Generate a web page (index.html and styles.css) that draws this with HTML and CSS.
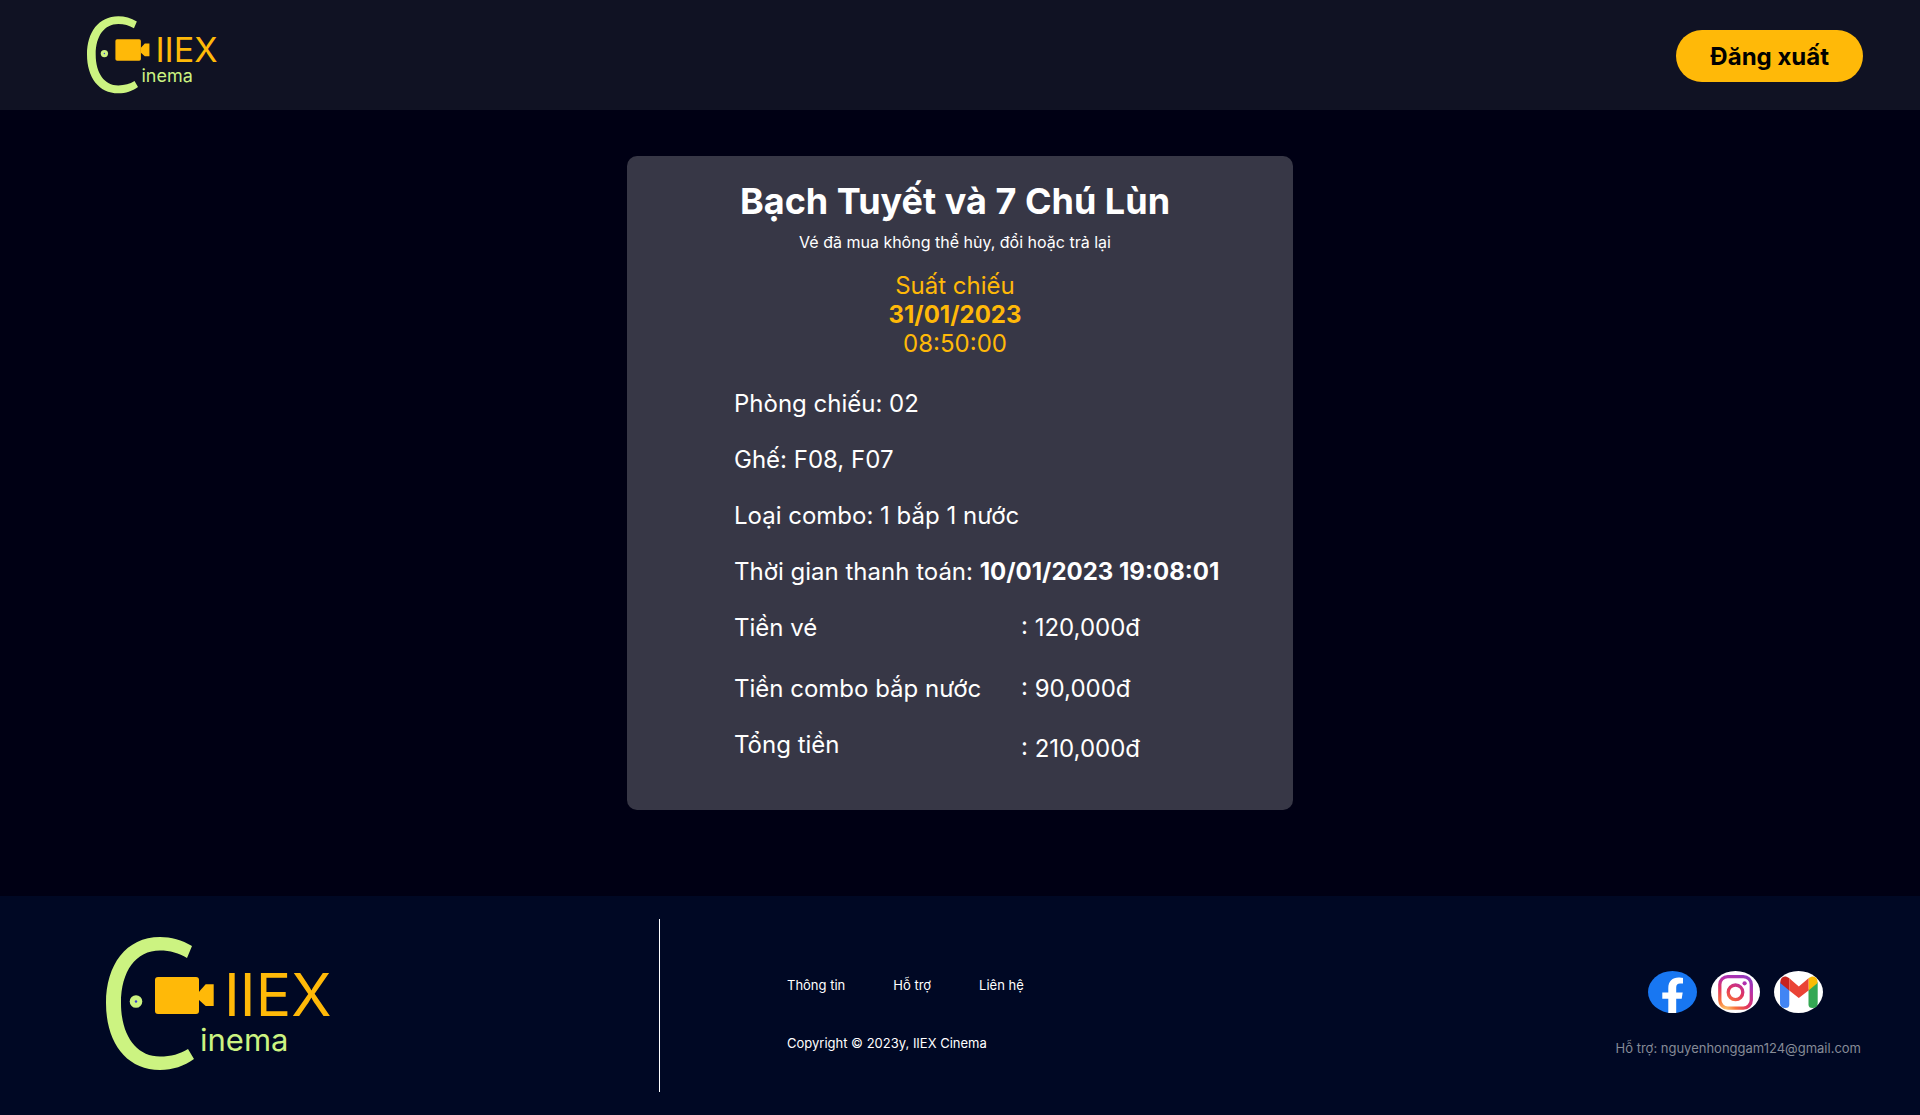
FILE: index.html
```html
<!DOCTYPE html>
<html lang="vi">
<head>
  <meta charset="utf-8">
  <meta name="viewport" content="width=device-width, initial-scale=1">
  <title>IIEX Cinema</title>
  <link rel="stylesheet" href="styles.css">
</head>
<body>
  <svg class="sprite" aria-hidden="true">
    <symbol id="logo" viewBox="0 0 226 134">
      <path fill="#ccf381" d="M86 9C76 3 65 0 54 0C20 0 0 28 0 66C0 105 20 133 54 133C67 133 78 129 88 122L82 112C74 117 65 119.500 54 119.500C30 119.500 15 98 15 66C15 34 30 13.500 54 13.500C64 13.500 73 16 81 21Z"/>
      <circle cx="30" cy="64.500" r="6.300" fill="#ccf381"/>
      <circle cx="30" cy="64.500" r="1.200" fill="#3a3fd8"/>
      <rect x="49" y="40" width="44" height="37" rx="3" fill="#ffb908"/>
      <path fill="#ffb908" d="M93 54.700L99.700 47.300H107.700V69H99.700L93 63Z"/>
      <text class="logo-name" x="118" y="79">IIEX</text>
      <text class="logo-sub" x="94" y="114">inema</text>
    </symbol>
  </svg>

  <header class="topbar">
    <a class="home" href="#" aria-label="IIEX Cinema"><svg class="logo logo-small"><use href="#logo"/></svg></a>
    <button class="logout" type="button">Đăng xuất</button>
  </header>

  <main class="main">
    <article class="ticket">
      <div class="intro">
        <h1 class="title">Bạch Tuyết và 7 Chú Lùn</h1>
        <p class="note">Vé đã mua không thể hủy, đổi hoặc trả lại</p>
        <p class="showtime">Suất chiếu<br><strong>31/01/2023</strong><br>08:50:00</p>
      </div>
      <div class="details">
        <p>Phòng chiếu: 02</p>
        <p>Ghế: F08, F07</p>
        <p>Loại combo: 1 bắp 1 nước</p>
        <p>Thời gian thanh toán: <strong>10/01/2023 19:08:01</strong></p>
        <table class="prices">
          <tbody>
            <tr><th scope="row">Tiền vé</th><td>: 120,000đ</td></tr>
            <tr><th scope="row">Tiền combo bắp nước</th><td>: 90,000đ</td></tr>
          </tbody>
          <tfoot>
            <tr><th scope="row">Tổng tiền</th><td>: 210,000đ</td></tr>
          </tfoot>
        </table>
      </div>
    </article>
  </main>

  <footer class="footer">
    <div class="brand"><svg class="logo logo-large" role="img" aria-label="IIEX Cinema"><use href="#logo"/></svg></div>
    <div class="info">
      <nav class="links">
        <a href="#">Thông tin</a>
        <a href="#">Hỗ trợ</a>
        <a href="#">Liên hệ</a>
      </nav>
      <p>Copyright © 2023y, IIEX Cinema</p>
    </div>
    <div class="contact">
      <div class="social">
        <a href="#" aria-label="Facebook">
          <svg viewBox="0 0 49 42">
            <ellipse cx="24.500" cy="21" rx="24.500" ry="21" fill="#1877f2"/>
            <path fill="#fff" d="M20.300 42V27.700H14.300V21.500H20.300V17C20.300 10.500 24.500 6.500 30.500 6.500C32.500 6.500 34 6.700 35 7V12.500H32C29.500 12.500 28.200 14 28.200 16.500V21.500H34.700L33.700 27.700H28.200V42Q24 42.600 20.300 42Z"/>
          </svg>
        </a>
        <a href="#" aria-label="Instagram">
          <svg viewBox="0 0 49 42">
            <defs>
              <radialGradient id="insta" gradientUnits="userSpaceOnUse" cx="14" cy="40" r="42">
                <stop offset="0" stop-color="#fed576"/>
                <stop offset=".26" stop-color="#f8713a"/>
                <stop offset=".55" stop-color="#e0355f"/>
                <stop offset=".8" stop-color="#b32fae"/>
                <stop offset="1" stop-color="#8a3cc0"/>
              </radialGradient>
            </defs>
            <ellipse cx="24.500" cy="21" rx="24.500" ry="21" fill="#fff"/>
            <rect x="8.800" y="5.600" width="31.500" height="31.500" rx="8" fill="none" stroke="url(#insta)" stroke-width="3.300"/>
            <circle cx="24.500" cy="21.300" r="7.300" fill="none" stroke="url(#insta)" stroke-width="3.300"/>
            <circle cx="33.600" cy="12.300" r="2.100" fill="url(#insta)"/>
          </svg>
        </a>
        <a href="#" aria-label="Gmail">
          <svg viewBox="0 0 49 42">
            <ellipse cx="24.500" cy="21" rx="24.500" ry="21" fill="#fff"/>
            <path fill="#4285f4" d="M6 11L15.300 18V33.500Q15.300 37 11.500 37Q6 37 6 32Z"/>
            <path fill="#34a853" d="M34.500 18L43.700 11V32Q43.700 37 38.500 37Q34.500 37 34.500 33.500Z"/>
            <path fill="#c5221f" d="M15.300 7.300V19.500L6.500 12.200C5.500 8 9.500 2.500 15.300 7.300Z"/>
            <path fill="#fbbc04" d="M34.500 7.300V19.500L43.300 12.200C44.500 8 40.500 2.500 34.500 7.300Z"/>
            <path fill="#ea4335" d="M15.300 7.300L24.800 15.500L34.500 7.300V19.500L24.800 27L15.300 19.500Z"/>
          </svg>
        </a>
      </div>
      <a class="mail" href="mailto:nguyenhonggam124@gmail.com">Hỗ trợ: nguyenhonggam124@gmail.com</a>
    </div>
  </footer>
</body>
</html>
```
FILE: styles.css
```css
* {
  box-sizing: border-box;
}

body {
  margin: 0;
  min-height: 100vh;
  display: flex;
  flex-direction: column;
  background: #000014;
  color: #fff;
  font-family: Inter, "Liberation Sans", sans-serif;
}

p,
h1 {
  margin: 0;
}

a {
  color: inherit;
  text-decoration: none;
}

.sprite {
  display: none;
}

.logo {
  display: block;
}

.logo-small {
  width: 131px;
  height: 78px;
}

.logo-large {
  width: 226px;
  height: 134px;
}

.logo-name {
  fill: #ffb908;
  font-size: 59px;
  font-weight: 400;
}

.logo-sub {
  fill: #ccf381;
  font-size: 31px;
  font-weight: 400;
}

.topbar {
  display: flex;
  align-items: center;
  justify-content: space-between;
  padding: 16px 57px 16px 87px;
  background: #101223;
}

.logout {
  margin-top: 2px;
  padding: 12px 34px 11px;
  border: 0;
  border-radius: 26px;
  background: #ffb908;
  color: #000;
  font: 700 24px/29px Inter, "Liberation Sans", sans-serif;
}

.main {
  flex: 1;
  padding: 46px 24px 86px;
}

.ticket {
  max-width: 666px;
  margin: 0 auto;
  padding: 23px 0 47px;
  border-radius: 10px;
  background: #373746;
  font-size: 24px;
  font-weight: 400;
  line-height: 29px;
}

.intro {
  padding-right: 10px;
  text-align: center;
}

.title {
  font-size: 36px;
  font-weight: 700;
  line-height: 44px;
}

.note {
  margin-top: 9px;
  font-size: 16px;
  line-height: 20px;
}

.showtime {
  margin-top: 19px;
  color: #ffb908;
}

strong {
  font-weight: 700;
  font-kerning: none;
}

.details {
  display: flex;
  flex-direction: column;
  gap: 27px;
  margin-top: 31px;
  padding-left: 107px;
}

.prices {
  border-collapse: collapse;
  width: 420px;
}

.prices th,
.prices td {
  padding: 0;
  text-align: left;
  font-weight: inherit;
}

.prices th {
  width: 287px;
  vertical-align: top;
}

.prices td {
  vertical-align: bottom;
}

.prices tbody th,
.prices tbody td {
  padding-bottom: 32px;
}

.prices tbody tr:last-child th,
.prices tbody tr:last-child td {
  padding-bottom: 27px;
}

.prices tfoot tr {
  height: 33px;
}

.footer {
  display: flex;
  margin-bottom: 1px;
  padding: 23px 59px 23px 106px;
  background: #000824;
  font-size: 13px;
  line-height: 16px;
}

.brand {
  width: 554px;
  padding: 18px 0 21px;
  border-right: 1px solid #fff;
}

.info {
  flex: 1;
  display: flex;
  flex-direction: column;
  gap: 42px;
  padding: 58px 0 0 127px;
}

.links {
  display: flex;
  gap: 48px;
}

.contact {
  padding-top: 52px;
}

.social {
  display: flex;
  justify-content: flex-end;
  gap: 14px;
  margin: 0 38px 27px 0;
}

.social svg {
  display: block;
  width: 49px;
  height: 42px;
}

.mail {
  color: #868b97;
}
```
